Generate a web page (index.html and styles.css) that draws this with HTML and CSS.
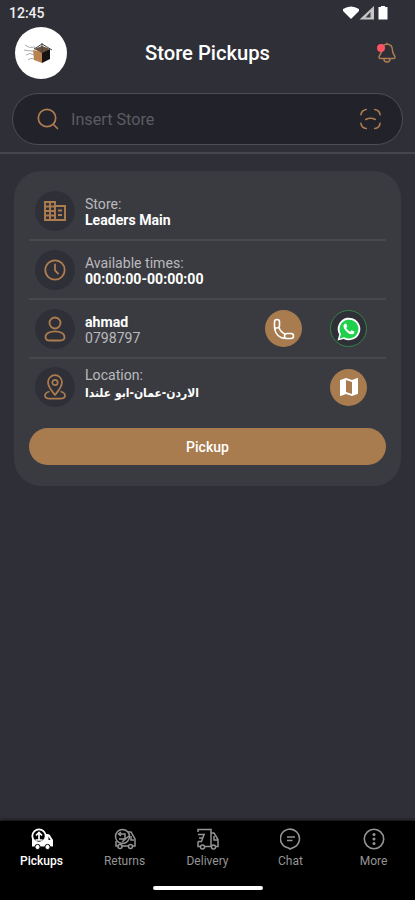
FILE: index.html
```html
<!DOCTYPE html>
<html lang="en">
<head>
<meta charset="utf-8">
<meta name="viewport" content="width=device-width, initial-scale=1">
<title>Store Pickups</title>
<link rel="stylesheet" href="styles.css">
</head>
<body>
<div class="app">
  <div class="status">
    <span class="time">12:45</span>
    <svg class="signals" width="48" height="16" viewBox="0 0 48 16" fill="#fff"><path d="M0 4Q8-1 16 4V6L8 14 0 6Z"/><path d="M31 1V14.500H16.500Z" fill="#c5c5c8"/><path d="M27.500 7v5.500h-5z" fill="#3a3a40"/><path d="M38 1h4v1h2.500v12.500h-9V2H38Z"/></svg>
  </div>
  <header class="header">
    <div class="avatar">
      <svg width="34" height="26" viewBox="0 0 34 26"><path d="M9 10 18 12V23L10 20Z" fill="#b9824f"/><path d="M18 12 26 9V19L18 23Z" fill="#171313"/><path d="M10 9 18 6 26 9 18 13Z" fill="#6b503b"/><path d="M18 3V12M10 9 18 4 28 10" fill="none" stroke="#444"/><path d="M1 5Q5 9 11 7M0 10Q5 11 9 11M2 15Q6 12 10 15M4 20Q7 17 10 19" fill="none" stroke="#aaa"/></svg>
    </div>
    <h1 class="title">Store Pickups</h1>
    <div class="bell">
      <svg width="20" height="22" viewBox="0 0 20 22" fill="none" stroke="#ad7d4f" stroke-width="1.500"><path d="M4.500 8.500C4.500 4 6.500 2.200 10 2.200S15.500 4.500 15.500 8.500C15.500 12 18 13 18 15.500 18 16.600 17 16.600 16 16.600H4C3 16.600 2 16.600 2 15.500 2 13 4.500 12 4.500 8.500Z"/><path d="M7 17C7 21 13 21 13 17M10 2V.8"/></svg>
      <span class="dot"></span>
    </div>
  </header>
  <div class="search">
    <svg width="22" height="22" viewBox="0 0 22 22" fill="none" stroke="#ad7d4f" stroke-width="1.700" stroke-linecap="round"><circle cx="10" cy="10" r="8.700"/><path d="m16.500 16.500 4 4"/></svg>
    <span class="placeholder">Insert Store</span>
    <svg width="21" height="22" viewBox="0 0 22 22" fill="none" stroke="#ad7d4f" stroke-width="1.700" stroke-linecap="round"><path d="M1 6.500C1.500 3 3 1.500 6.500 1M15.500 1C19 1.500 20.500 3 21 6.500M21 15.500C20.500 19 19 20.500 15.500 21M6.500 21C3 20.500 1.500 19 1 15.500M6 11.500Q11 9 16 11.500"/></svg>
  </div>
  <main class="content">
    <section class="card">
      <div class="row">
        <div class="badge"><svg width="22" height="20" viewBox="0 0 22 20" fill="none" stroke="#ad7d4f" stroke-width="1.900"><path d="M1 1H11V19H1ZM11 5H21V19H11M1 5.500H11M1 10H11M1 14.500H11M6 1V19M14 9.500h4M14 14h4"/></svg></div>
        <div class="info"><span class="label">Store:</span><b>Leaders Main</b></div>
      </div>
      <div class="row">
        <div class="badge"><svg width="22" height="22" viewBox="0 0 22 22" fill="none" stroke="#ad7d4f" stroke-width="1.800" stroke-linecap="round"><circle cx="11" cy="11" r="9.700"/><path d="M11 5.500V11.500L14 14.500"/></svg></div>
        <div class="info"><span class="label">Available times:</span><b>00:00:00-00:00:00</b></div>
      </div>
      <div class="row">
        <div class="badge"><svg width="22" height="26" viewBox="0 0 22 26" fill="none" stroke="#ad7d4f" stroke-width="1.800"><circle cx="11" cy="7" r="5.500"/><path d="M1.500 21C1.500 13.500 20.500 13.500 20.500 21 20.500 24 18.500 24.500 16 24.500H6C3.500 24.500 1.500 24 1.500 21Z"/></svg></div>
        <div class="info"><b>ahmad</b><span class="label">0798797</span></div>
        <div class="actions">
          <div class="action"><svg width="22" height="22" viewBox="0 0 22 22" fill="none" stroke="#fff" stroke-width="1.600" stroke-linejoin="round"><path d="M1.500 9V4Q1.500 1.500 4 1.500T6.500 4V7.500Q6.500 10 4 10T1.500 9C2 15.500 6 20.500 13.500 20.500H18Q20.500 20.500 20.500 18T18 15.500H14Q11.500 15.500 11.500 18T13.500 20.500M6 9.500Q7.500 14 12 16"/></svg></div>
          <div class="action whatsapp"><svg width="24" height="24" viewBox="0 0 24 24"><path d="M.5 23.500 2.200 17.600A11.300 11.300 0 1 1 6.600 21.900Z" fill="#fff"/><path d="M2.600 21.400 4 17A9.400 9.400 0 1 1 7.300 20.200Z" fill="#20cf4c"/><path d="M8.500 6.500C6 7 6 10 8 12.800 10 15.700 12.500 17.500 15 17.300 17 17 17.600 15.500 17.300 14.500L14.500 13.200 13.300 14.700C11.200 13.800 9.900 12.300 9.200 10.900L10.300 9.600 9.300 6.800Z" fill="#fff"/></svg></div>
        </div>
      </div>
      <div class="row">
        <div class="badge"><svg width="22" height="26" viewBox="0 0 22 26" fill="none" stroke="#ad7d4f" stroke-width="1.700" stroke-linejoin="round"><path d="M11 21C8 17 4 13 4 8.200A7 7 0 0 1 18 8.200C18 13 14 17 11 21Z"/><circle cx="11" cy="8.500" r="2.700"/><path d="M5.500 17.500C2 18.500 1 20 1 21.500 1 24 3.500 24.700 6 24.700H16C18.500 24.700 21 24 21 21.500 21 20 20 18.500 16.500 17.500"/></svg></div>
        <div class="info location"><span class="label">Location:</span><b class="place" dir="rtl" lang="ar">الاردن-عمان-ابو علندا</b></div>
        <div class="actions">
          <div class="action"><svg width="24" height="24" viewBox="0 0 24 24" fill="#fff"><path d="m20.500 3-.16.030L15 5.100 9 3 3.360 4.900c-.21.070-.36.250-.36.480V20.500c0 .28.220.5.500.5l.16-.03L9 18.900l6 2.100 5.640-1.900c.21-.07.36-.25.360-.48V3.500c0-.28-.22-.5-.5-.5zM15 19l-6-2.110V5l6 2.110V19z"/></svg></div>
        </div>
      </div>
      <button class="pickup">Pickup</button>
    </section>
  </main>
  <nav class="nav">
    <div class="tabs">
      <div class="tab active"><svg width="22" height="22" viewBox="0 0 22 22"><path d="M13 6H16.500Q19 6 20 9L22 12V18.500H1V11Z" fill="#fff"/><path d="m17.500 8.500 2 3.500h-2z" fill="#000"/><circle cx="8" cy="8" r="6.700" fill="#000" stroke="#fff" stroke-width="1.800"/><path d="M8 12V5M5 7.500 8 4.500 11 7.500M4.500 12h7" fill="none" stroke="#fff" stroke-width="1.700"/><g fill="#fff" stroke="#000"><circle cx="6.500" cy="19" r="2.600"/><circle cx="16.500" cy="19" r="2.600"/></g></svg><span>Pickups</span></div>
      <div class="tab"><svg width="22" height="22" viewBox="0 0 22 22" fill="none" stroke="currentColor" stroke-width="1.500"><circle cx="8.500" cy="8.500" r="7"/><path d="M4.500 6H11V11H5M7 4 4.500 6 7 8M8 14 15 8M14 4h3l4 7v7h-2M2 13v5h2M8 18h6"/><circle cx="6" cy="18.500" r="2"/><circle cx="16.500" cy="18.500" r="2"/><path d="M17 8v4h3"/></svg><span>Returns</span></div>
      <div class="tab"><svg width="22" height="22" viewBox="0 0 22 22" fill="none" stroke="currentColor" stroke-width="1.500"><path d="M1 4V1.500H14V18.500H8M1 6.500H8M2 10H6M1 13.500H5M7 6.500 4.500 13.500M1 13.500V18.500H3M14 5H17L21 11.500V18.500H19"/><path d="M17 8v4h4"/><circle cx="5.500" cy="19" r="2"/><circle cx="16.500" cy="19" r="2"/></svg><span>Delivery</span></div>
      <div class="tab"><svg width="22" height="22" viewBox="0 0 22 22" fill="none" stroke="currentColor" stroke-width="1.600"><path d="M8.500 20A9.500 9.500 0 1 1 14 19.200L10 21Z"/><path d="M7 9h8M7 12.500h5.500"/></svg><span>Chat</span></div>
      <div class="tab"><svg width="22" height="22" viewBox="0 0 22 22" fill="none" stroke="currentColor" stroke-width="1.600"><circle cx="11" cy="11" r="9.700"/><g fill="currentColor" stroke="none"><circle cx="11" cy="6.500" r="1.500"/><circle cx="11" cy="11" r="1.500"/><circle cx="11" cy="15.500" r="1.500"/></g></svg><span>More</span></div>
    </div>
    <div class="handle"></div>
  </nav>
</div>
</body>
</html>
```
FILE: styles.css
```css
* { box-sizing: border-box; }
body { margin: 0; background: #2f2f38; color: #fff; font-family: Roboto, "Noto Sans", sans-serif; }
svg { display: block; flex: none; }
.app { height: 900px; display: flex; flex-direction: column; overflow: hidden; }
.status { height: 26px; flex: none; display: flex; justify-content: space-between; padding: 5px 24px 0 9px; }
.time { font-size: 14px; line-height: 17px; font-weight: 500; color: #eee; }
.header { height: 67px; flex: none; display: flex; justify-content: space-between; padding: 1px 18px 0 15px; }
.avatar { width: 52px; height: 52px; border-radius: 50%; background: #fff; display: flex; align-items: center; justify-content: center; }
.title { margin: 0; padding-left: 3px; font-size: 20.200px; line-height: 53px; font-weight: 500; }
.bell { position: relative; width: 52px; height: 52px; display: flex; align-items: center; justify-content: flex-end; }
.dot { position: absolute; left: 32px; top: 17px; width: 8px; height: 8px; border-radius: 50%; background: #fb5360; }
.search { height: 52px; flex: none; margin: 0 12px; padding: 0 21px 0 24px; display: flex; align-items: center; border: 1.500px solid #4e4d56; border-radius: 26px; background: #22222b; }
.placeholder { flex: 1; margin-left: 12px; font-size: 16.200px; color: #5c5b61; }
.content { flex: 1; margin-top: 7px; border-top: 2px solid #47464f; padding: 17px 14px 0; }
.card { height: 315px; border-radius: 27px; padding: 11px 15px 0; background: #3a3b40; }
.row { height: 59px; display: flex; align-items: center; border-bottom: 2px solid #47474d; padding-left: 6px; }
.row:nth-child(4) { height: 56px; border-bottom: 0; }
.badge { width: 40px; height: 40px; border-radius: 50%; background: #2f2f38; display: flex; align-items: center; justify-content: center; }
.info { flex: 1; margin-left: 10px; padding-top: 2px; display: flex; flex-direction: column; align-items: flex-start; font-size: 14.100px; line-height: 16px; }
.info b { font-weight: 700; }
.label { color: #b9b9bd; }
.info.location { padding: 0 0 6px; }
.info .place { margin-top: 2px; font-size: 12px; line-height: 16px; font-family: "DejaVu Sans Condensed", "DejaVu Sans", sans-serif; }
.actions { display: flex; gap: 28px; margin-right: 19px; }
.action { width: 37px; height: 37px; border-radius: 50%; background: #a87c4f; display: flex; align-items: center; justify-content: center; }
.whatsapp { background: #2f2f38; border: 1px solid #328448; }
.pickup { display: block; width: 100%; height: 37px; margin-top: 13px; padding: 0; border: 0; border-radius: 19px; background: #a87c4f; color: #fff; font: 500 14px Roboto, sans-serif; }
.nav { height: 79px; flex: none; background: #000; box-shadow: 0 -1px 3px #111; }
.tabs { display: grid; grid-template-columns: repeat(5, 1fr); height: 65px; padding-top: 7px; }
.tab { display: flex; flex-direction: column; align-items: center; gap: 3px; color: #949494; font-size: 12px; line-height: 16px; }
.active { color: #fff; font-weight: 500; }
.handle { width: 110px; height: 4px; border-radius: 2px; margin: 0 auto; background: #fff; }
```
